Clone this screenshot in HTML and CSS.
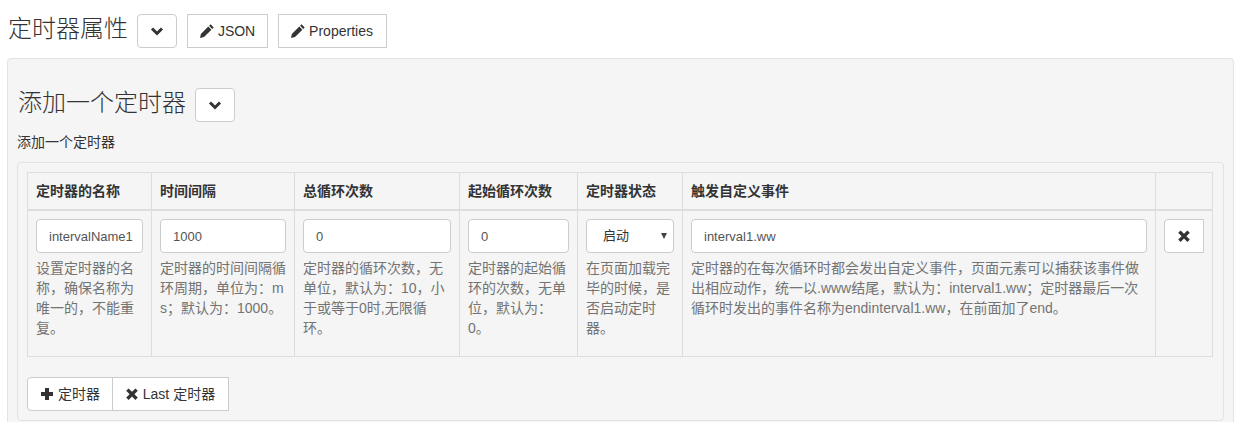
FILE: index.html
```html
<!DOCTYPE html>
<html lang="zh-CN">
<head>
<meta charset="utf-8">
<title>定时器属性</title>
<link rel="stylesheet" href="styles.css">
</head>
<body>
<div class="page">
  <div class="head-row">
    <h3 class="title">定时器属性</h3>
    <button class="btn btn-round btn-icon"><svg class="ico" viewBox="0 0 14 14"><path class="chev" d="M2 4.5 7 9.5 12 4.5"/></svg></button>
    <button class="btn"><svg class="ico" viewBox="0 0 14 14"><path class="fill" d="M10.6 0.3 13.7 3.4 12.2 4.9 9.1 1.8ZM8.3 2.6 11.4 5.7 4 13.1 0 14 0.9 10Z"/></svg> JSON</button>
    <button class="btn btn-wide"><svg class="ico" viewBox="0 0 14 14"><path class="fill" d="M10.6 0.3 13.7 3.4 12.2 4.9 9.1 1.8ZM8.3 2.6 11.4 5.7 4 13.1 0 14 0.9 10Z"/></svg> Properties</button>
  </div>
  <div class="well">
    <div class="head-row sub-head">
      <h3 class="title">添加一个定时器</h3>
      <button class="btn btn-round btn-icon"><svg class="ico" viewBox="0 0 14 14"><path class="chev" d="M2 4.5 7 9.5 12 4.5"/></svg></button>
    </div>
    <p class="desc">添加一个定时器</p>
    <div class="well inner">
      <table class="grid">
        <colgroup>
          <col class="c1"><col class="c2"><col class="c3"><col class="c4"><col class="c5"><col class="c6"><col class="c7">
        </colgroup>
        <thead>
          <tr>
            <th>定时器的名称</th>
            <th>时间间隔</th>
            <th>总循环次数</th>
            <th>起始循环次数</th>
            <th>定时器状态</th>
            <th>触发自定义事件</th>
            <th></th>
          </tr>
        </thead>
        <tbody>
          <tr>
            <td><input class="field" type="text" value="intervalName1"><p class="help">设置定时器的名称，确保名称为唯一的，不能重复。</p></td>
            <td><input class="field" type="text" value="1000"><p class="help">定时器的时间间隔循环周期，单位为：ms；默认为：1000。</p></td>
            <td><input class="field" type="text" value="0"><p class="help">定时器的循环次数，无单位，默认为：10，小于或等于0时,无限循环。</p></td>
            <td><input class="field" type="text" value="0"><p class="help">定时器的起始循环的次数，无单位，默认为：0。</p></td>
            <td><div class="pick-wrap"><select class="field pick"><option>启动</option></select></div><p class="help">在页面加载完毕的时候，是否启动定时器。</p></td>
            <td><input class="field" type="text" value="interval1.ww"><p class="help">定时器的在每次循环时都会发出自定义事件，页面元素可以捕获该事件做出相应动作，统一以.www结尾，默认为：interval1.ww；定时器最后一次循环时发出的事件名称为endinterval1.ww，在前面加了end。</p></td>
            <td><button class="btn btn-icon btn-left"><svg class="ico" viewBox="0 0 14 14"><path class="fill" d="M3.6 1.4 7 4.8 10.4 1.4 12.8 3.8 9.4 7.2 12.8 10.6 10.4 13 7 9.6 3.6 13 1.2 10.6 4.6 7.2 1.2 3.8Z"/></svg></button></td>
          </tr>
        </tbody>
      </table>
      <div class="group">
        <button class="btn btn-left"><svg class="ico" viewBox="0 0 14 14"><path class="fill" d="M5 1H9V5H13V9H9V13H5V9H1V5H5Z"/></svg> 定时器</button><button class="btn btn-join btn-wide"><svg class="ico" viewBox="0 0 14 14"><path class="fill" d="M3.6 1.4 7 4.8 10.4 1.4 12.8 3.8 9.4 7.2 12.8 10.6 10.4 13 7 9.6 3.6 13 1.2 10.6 4.6 7.2 1.2 3.8Z"/></svg> Last 定时器</button>
      </div>
    </div>
  </div>
</div>
</body>
</html>
```
FILE: styles.css
```css
* { box-sizing: border-box; }
html, body { margin: 0; padding: 0; overflow: hidden; }
body {
  background: #fff;
  color: #333;
  font-family: "Liberation Sans", "Noto Sans CJK SC", sans-serif;
  font-size: 14px;
  line-height: 20px;
}
.page { padding: 14px 2px 0 7px; }
.head-row { display: flex; align-items: center; gap: 10px; }
.title {
  align-self: flex-start;
  margin: 0 -1px 0 0;
  padding-left: 1px;
  font-size: 24px;
  font-weight: 300;
  line-height: 30px;
}
.btn {
  display: inline-block;
  height: 34px;
  padding: 6px 12px;
  background: #fff;
  border: 1px solid #ccc;
  border-radius: 0;
  color: #333;
  font: inherit;
  white-space: nowrap;
}
.btn-round { border-radius: 4px; }
.btn-icon { width: 40px; padding: 6px 0; text-align: center; }
.btn-left { border-radius: 4px 0 0 4px; }
.btn-join { margin-left: -1px; }
.btn-wide { padding-right: 13px; }
.ico { display: inline-block; width: 14px; height: 14px; vertical-align: -2px; }
.fill { fill: #333; }
.chev { fill: none; stroke: #333; stroke-width: 3; }
.well {
  margin-top: 10px;
  padding: 19px 9px;
  background: #f5f5f5;
  border: 1px solid #e3e3e3;
  border-radius: 4px;
}
.sub-head { margin-top: 10px; }
.desc { margin: 10px 0 0; }
.inner { padding: 9px; }
.grid {
  width: 1185px;
  table-layout: fixed;
  border-collapse: collapse;
  margin-bottom: 20px;
}
.c1 { width: 124px; }
.c2 { width: 143px; }
.c3 { width: 165px; }
.c4 { width: 118px; }
.c5 { width: 105px; }
.c6 { width: 473px; }
.c7 { width: 57px; }
.grid th, .grid td {
  border: 1px solid #ddd;
  padding: 8px;
  text-align: left;
  vertical-align: top;
}
.grid th { border-bottom-width: 2px; font-weight: 700; }
.field {
  display: block;
  width: 100%;
  height: 34px;
  padding: 6px 0 6px 12px;
  background: #fff;
  border: 1px solid #ccc;
  border-radius: 4px;
  color: #555;
  font: inherit;
  font-size: 13px;
}
.pick-wrap { position: relative; }
.pick-wrap::after {
  content: "";
  position: absolute;
  right: 7px;
  top: 14px;
  border-left: 3.5px solid transparent;
  border-right: 3.5px solid transparent;
  border-top: 6px solid #444;
}
.pick { appearance: none; padding-left: 16px; color: #333; }
.help {
  margin: 5px 0 10px;
  color: #737373;
  word-break: break-all;
}
.group { display: flex; }
```
